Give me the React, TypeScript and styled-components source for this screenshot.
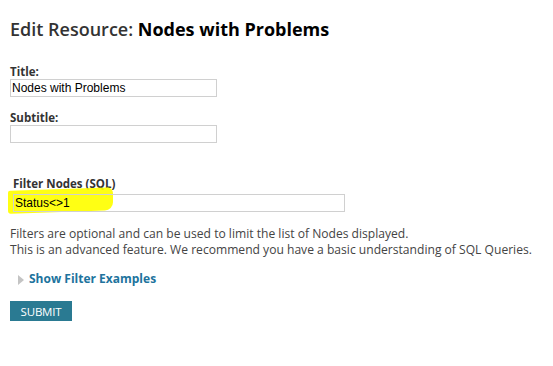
import React from "react";
import styled, { createGlobalStyle } from "styled-components";

const GlobalStyle = createGlobalStyle`
  html, body {
    margin: 0;
    padding: 0;
    background: #ffffff;
  }
  body {
    font-family: "Open Sans", "Liberation Sans", sans-serif;
    color: #333333;
  }
`;

const Page = styled.div`
  padding: 17px 10px 0 10px;
  display: flex;
  flex-direction: column;
`;

const Heading = styled.h1`
  margin: 0 0 24px 0;
  font-size: 18px;
  font-weight: 600;
  color: #333333;
  line-height: 24px;
`;

const HeadingName = styled.span`
  color: #000000;
  font-weight: 700;
`;

const Field = styled.div<{ indent?: number; gap?: number }>`
  display: flex;
  flex-direction: column;
  padding-left: ${props => props.indent || 0}px;
  margin-bottom: ${props => props.gap || 0}px;
`;

const Label = styled.label<{ tight?: boolean }>`
  font-size: 11.5px;
  font-weight: 700;
  color: #333333;
  line-height: ${props => (props.tight ? 12 : 14)}px;
`;

const TextInput = styled.input<{ w: number }>`
  box-sizing: border-box;
  width: ${props => props.w}px;
  height: 18px;
  margin: 0;
  padding: 0 1px;
  border: 1px solid #d0d0d0;
  font-family: "Liberation Sans", Arial, sans-serif;
  font-size: 12px;
  color: #000000;
  background: #ffffff;
  outline: none;
`;

const Highlight = styled.div`
  position: relative;
  width: 332px;
`;

const Marker = styled.div`
  position: absolute;
  left: -5px;
  top: -1px;
  width: 105px;
  height: 23px;
  background: #ffff00;
  border-radius: 2px 6px 8px 3px;
  transform: skewY(-2deg);
  opacity: 0.92;
`;

const HighlightedInput = styled(TextInput)`
  position: relative;
  background: transparent;
`;

const Help = styled.p`
  margin: 14px 0 0 0;
  font-size: 12.1px;
  line-height: 16px;
  color: #444444;
`;

const Toggle = styled.div`
  display: flex;
  align-items: center;
  gap: 5px;
  margin: 13px 0 0 8px;
  cursor: pointer;
`;

const Arrow = styled.span`
  width: 0;
  height: 0;
  border-top: 5px solid transparent;
  border-bottom: 5px solid transparent;
  border-left: 6px solid #c4c4c4;
  margin-top: 2px;
`;

const ToggleText = styled.span`
  font-size: 12px;
  font-weight: 700;
  color: #20739d;
  line-height: 16px;
`;

const SubmitButton = styled.button`
  align-self: flex-start;
  margin-top: 14px;
  height: 20px;
  width: 62px;
  padding: 0;
  border: none;
  background: #2a7a92;
  color: #ffffff;
  font-family: "Open Sans", "Liberation Sans", sans-serif;
  font-size: 11.5px;
  letter-spacing: -0.2px;
  cursor: pointer;
`;

const App = () => (
  <>
    <GlobalStyle />
    <Page>
      <Heading>
        Edit Resource: <HeadingName>Nodes with Problems</HeadingName>
      </Heading>
      <Field gap={14}>
        <Label>Title:</Label>
        <TextInput w={207} defaultValue="Nodes with Problems" />
      </Field>
      <Field gap={35}>
        <Label>Subtitle:</Label>
        <TextInput w={207} defaultValue="" />
      </Field>
      <Field indent={3}>
        <Label tight>Filter Nodes (SQL)</Label>
        <Highlight>
          <Marker />
          <HighlightedInput w={332} defaultValue="Status<>1" />
        </Highlight>
      </Field>
      <Help>
        Filters are optional and can be used to limit the list of Nodes displayed.
        <br />
        This is an advanced feature. We recommend you have a basic understanding of SQL Queries.
      </Help>
      <Toggle>
        <Arrow />
        <ToggleText>Show Filter Examples</ToggleText>
      </Toggle>
      <SubmitButton>SUBMIT</SubmitButton>
    </Page>
  </>
);

export default App;
